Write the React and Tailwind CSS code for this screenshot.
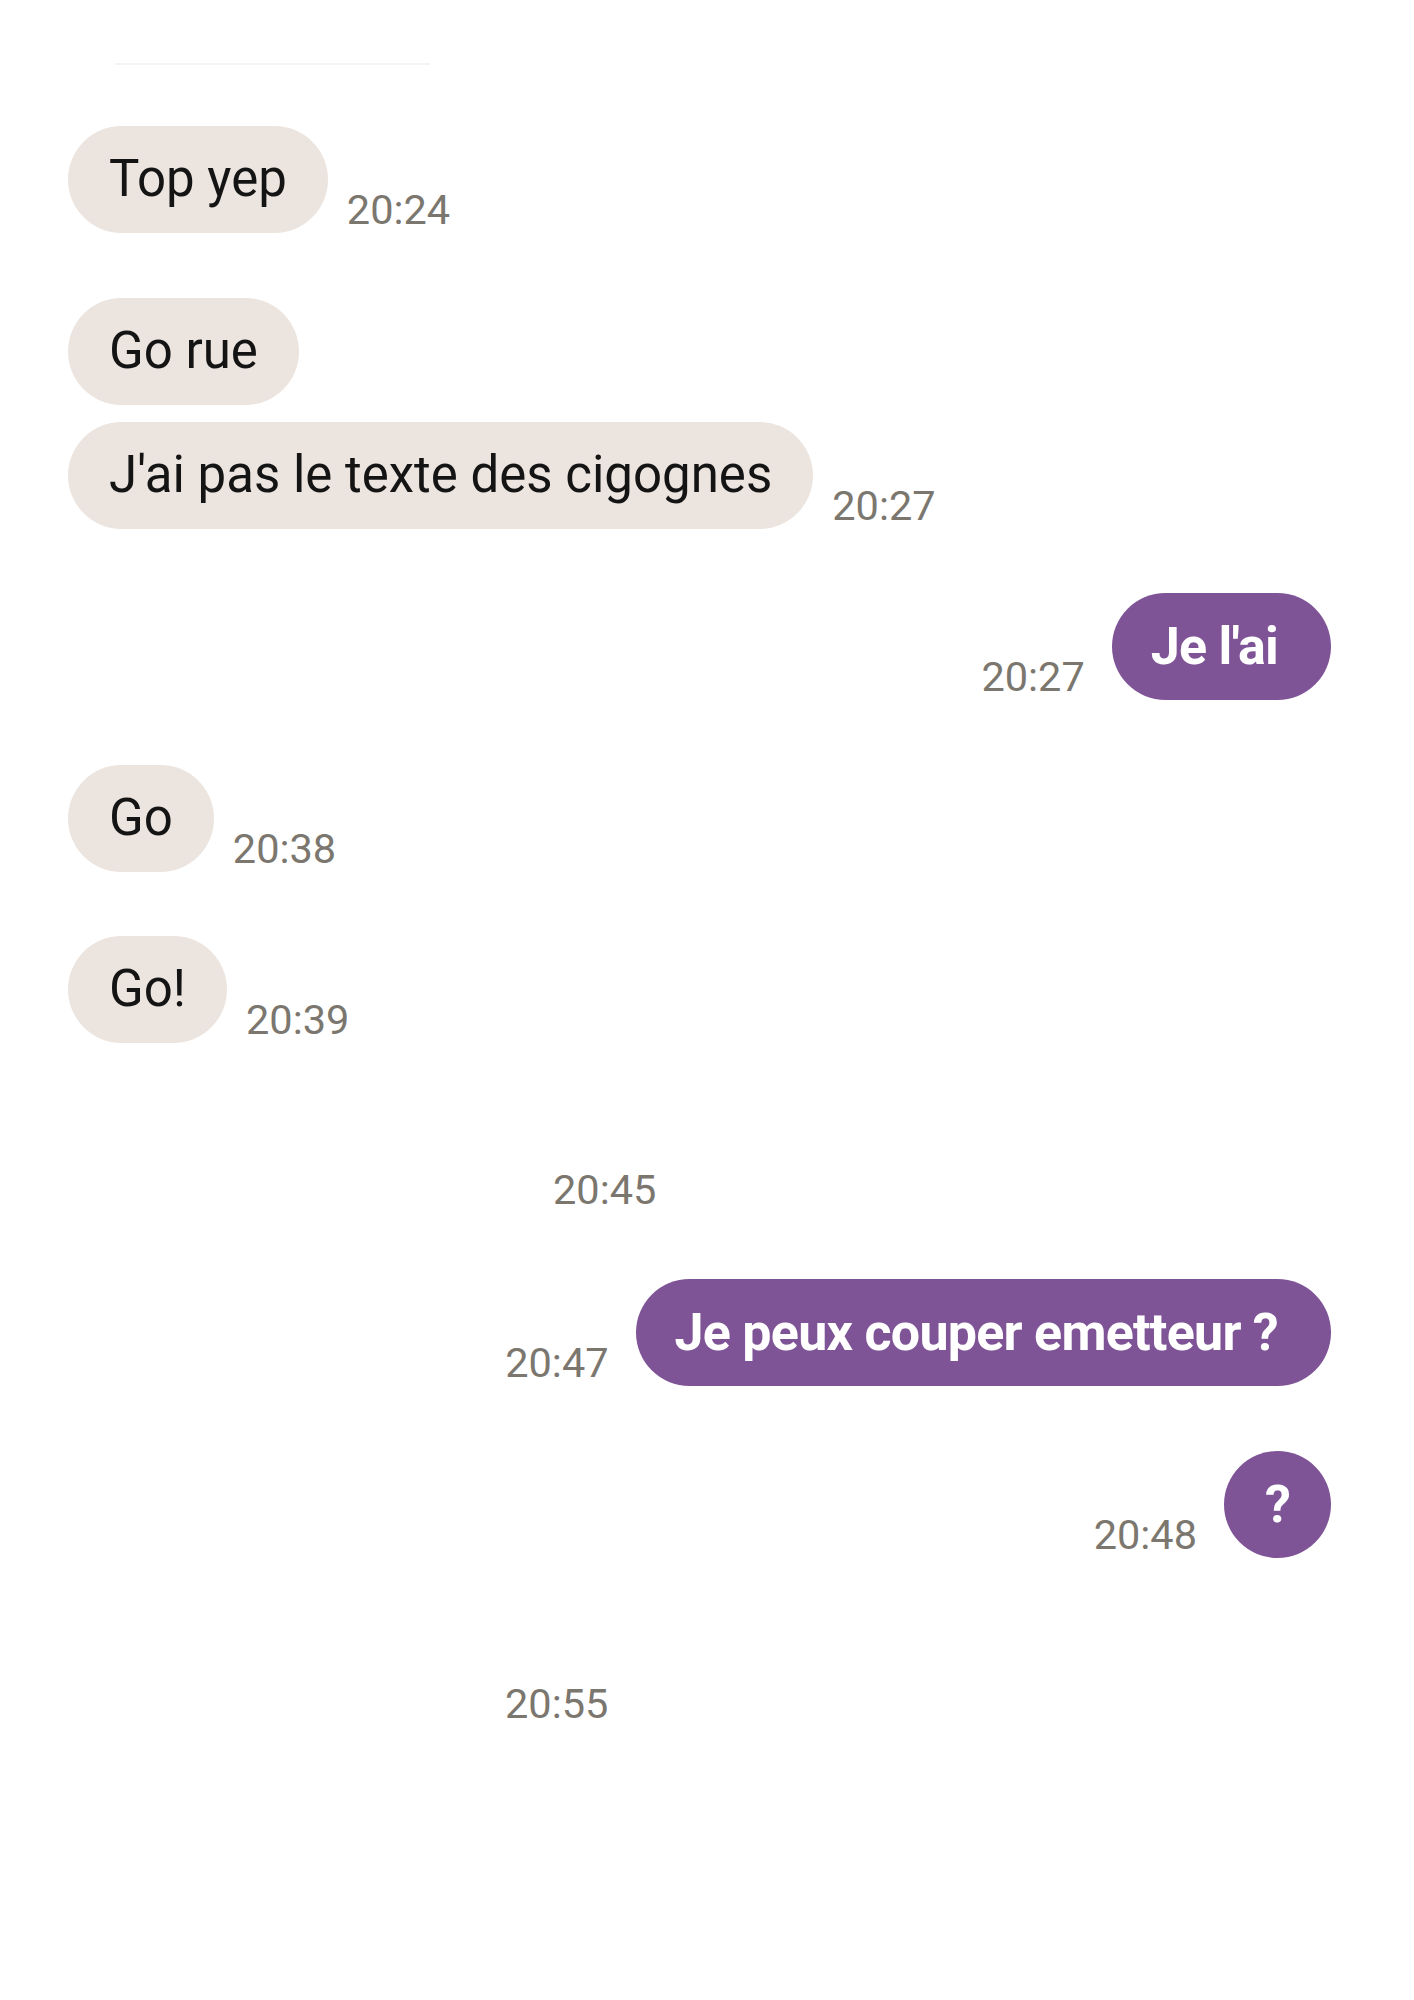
const font = { fontFamily: 'Roboto, "Noto Sans", sans-serif' };

function Time({ children, className = '' }) {
  return (
    <span className={`text-[41.5px] leading-none text-[#7b776f] ${className}`}>{children}</span>
  );
}

function In({ text, time, className = '' }) {
  return (
    <div className={`flex items-end ${className}`}>
      <div className="h-[107px] flex items-center px-[41px] rounded-full bg-[#ece4de] text-[51px] text-[#141414] whitespace-nowrap">
        {text}
      </div>
      {time && <Time className="ml-[19px] mb-[3px]">{time}</Time>}
    </div>
  );
}

function Out({ text, time, className = '', round = false }) {
  return (
    <div className={`flex items-end justify-end ${className}`}>
      {time && <Time className="mr-[27px] mb-[3px]">{time}</Time>}
      <div
        className={`h-[107px] flex items-center rounded-full bg-[#7e5497] text-[52px] font-bold text-white whitespace-nowrap tracking-[-0.75px] ${round ? 'w-[107px] justify-center' : 'pl-[39px] pr-[53px]'}`}
      >
        {text}
      </div>
    </div>
  );
}

export default function App() {
  return (
    <div className="w-[1414px] min-h-[2000px] bg-white" style={font}>
      <div className="flex flex-col pl-[68px] pr-[83px]">
        <div className="mt-[63px] ml-[47px] w-[315px] h-[2px] bg-[#f5f4f3]" />
        <In text="Top yep" time="20:24" className="mt-[61px]" />
        <In text="Go rue" className="mt-[65px]" />
        <In text="J'ai pas le texte des cigognes" time="20:27" className="mt-[17px]" />
        <Out text="Je l'ai" time="20:27" className="mt-[64px]" />
        <In text="Go" time="20:38" className="mt-[65px]" />
        <In text="Go!" time="20:39" className="mt-[64px]" />
        <div className="mt-[126px] pl-[485px]">
          <Time>20:45</Time>
        </div>
        <Out text="Je peux couper emetteur ?" time="20:47" className="mt-[68px]" />
        <Out text="?" time="20:48" round className="mt-[65px]" />
        <div className="mt-[125px] pl-[437px]">
          <Time>20:55</Time>
        </div>
      </div>
    </div>
  );
}
